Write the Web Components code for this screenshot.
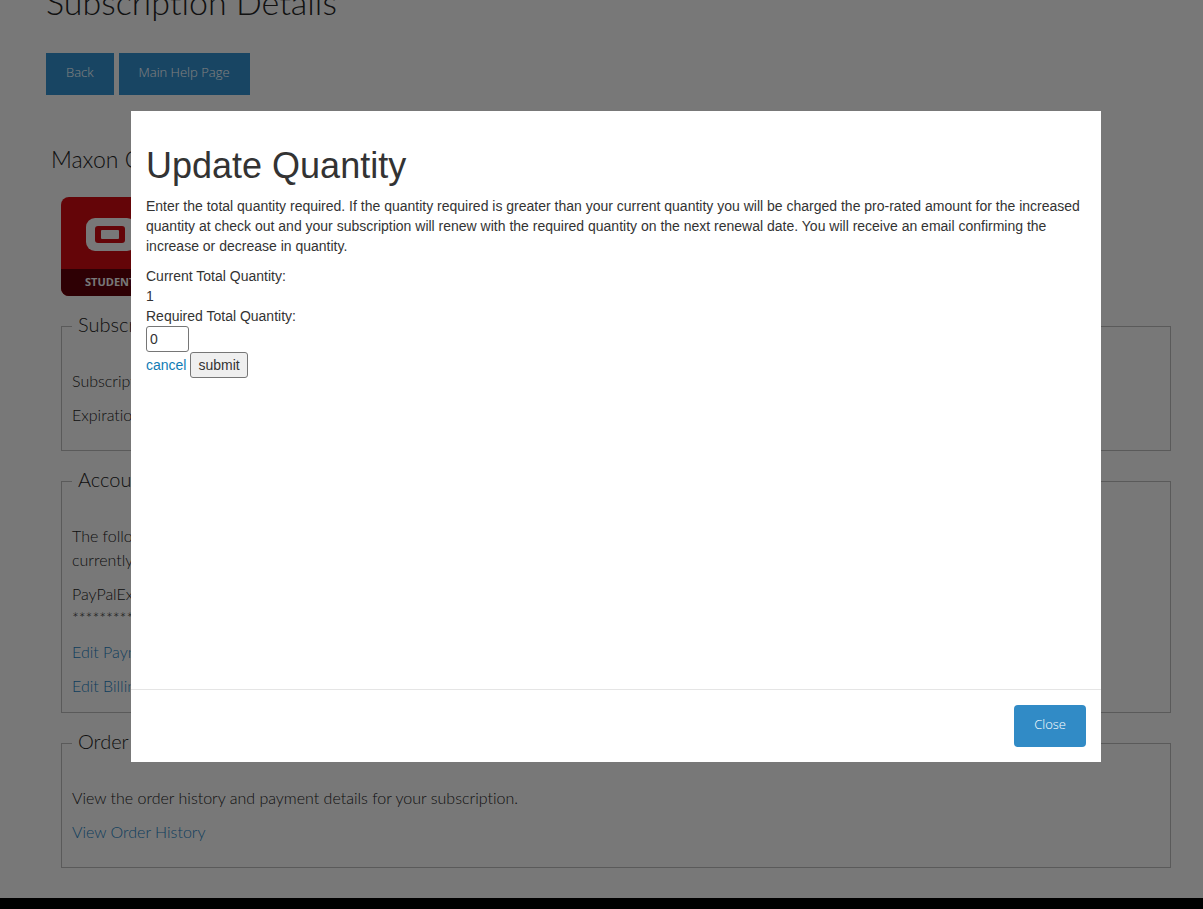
<!DOCTYPE html>
<html lang="en">
<head>
<meta charset="utf-8">
<title>Subscription Details</title>
<meta name="viewport" content="width=device-width, initial-scale=1">
<style>
body { margin: 0; background: #000; color: #222; font: 300 16px/24px Lato, "Open Sans", sans-serif;
  font-variant-ligatures: none; }
</style>
</head>
<body>
<subscription-page></subscription-page>
<quantity-dialog></quantity-dialog>
<script>
const define = (name, html) => customElements.define(name, class extends HTMLElement {
  constructor() {
    super();
    this.attachShadow({ mode: "open" }).innerHTML = html;
  }
});

define("action-button", `
<style>
:host { display: inline-block; }
button { display: block; height: 42px; padding: 0 20px 5px; border: 0; border-radius: var(--radius, 0);
  background: #318bc6; color: #fff; font: 300 13px/20px "Open Sans", sans-serif; cursor: pointer; }
</style>
<button type="button"><slot></slot></button>`);

define("product-badge", `
<style>
:host { display: block; width: 100px; height: 99px; }
svg { display: block; }
</style>
<svg width="100" height="99" viewBox="0 0 100 99" role="img" aria-label="Student product">
  <defs><clipPath id="tile"><rect width="100" height="99" rx="8"/></clipPath></defs>
  <g clip-path="url(#tile)">
    <rect width="100" height="99" fill="#c80a10"/>
    <rect y="72" width="100" height="27" fill="#5c0008"/>
  </g>
  <rect x="25" y="21" width="50" height="33" rx="9" fill="#f0f0f0"/>
  <rect x="34" y="29" width="30" height="17" rx="3" fill="#c80a10"/>
  <rect x="40" y="33" width="18" height="9" rx="1" fill="#f0f0f0"/>
  <text x="24" y="89" font-family="Open Sans, sans-serif" font-size="11" font-weight="700" fill="#f0f0f0">STUDENT</text>
</svg>`);

define("detail-group", `
<style>
:host { display: block; }
fieldset { min-width: 0; margin: 0; padding: 0 10px 23px; border: 1px solid #b4b4b4; }
:host([compact]) fieldset { padding-bottom: 14px; }
legend { padding: 0 6px 4px; font-size: 20px; line-height: 26px; }
.content { display: flex; flex-direction: column; align-items: flex-start; gap: 10px; padding-top: 28px; }
</style>
<fieldset><legend><slot name="title"></slot></legend><div class="content"><slot></slot></div></fieldset>`);

define("subscription-page", `
<style>
:host { display: block; background: #f1f1f1; padding: 0 32px 30px 46px; overflow: hidden; }
h1 { margin: -22px 0 0; font-size: 34px; font-weight: 300; line-height: 48px; }
.actions { display: flex; gap: 5px; margin-top: 27px; }
.product { margin: 49px 0 0 5px; font-size: 23px; font-weight: 300; line-height: 30px; }
.body { display: flex; flex-direction: column; gap: 15px; margin: 23px 0 0 15px; }
p { margin: 0; }
a { color: #1c7cba; text-decoration: none; }
</style>
<main>
  <h1>Subscription Details</h1>
  <nav class="actions">
    <action-button>Back</action-button>
    <action-button>Main Help Page</action-button>
  </nav>
  <h2 class="product">Maxon One</h2>
  <div class="body">
    <product-badge></product-badge>
    <detail-group>
      <span slot="title">Subscription</span>
      <p>Subscription</p>
      <p>Expiration</p>
    </detail-group>
    <detail-group compact>
      <span slot="title">Account</span>
      <p>The following<br>currently</p>
      <p>PayPalExpress<br>************</p>
      <a href="#">Edit Payment</a>
      <a href="#">Edit Billing</a>
    </detail-group>
    <detail-group>
      <span slot="title">Order History</span>
      <p>View the order history and payment details for your subscription.</p>
      <a href="#">View Order History</a>
    </detail-group>
  </div>
</main>`);

define("quantity-dialog", `
<style>
:host { position: fixed; inset: 0; display: flex; flex-direction: column; align-items: center;
  padding: 111px 15px 0 44px; background: rgba(0, 0, 0, .5); overflow: auto; box-sizing: border-box; }
section { width: 100%; max-width: 970px; background: #fff; color: #333;
  font: 400 14px/20px "Liberation Sans", Arial, sans-serif; }
.body { min-height: 543px; padding: 35px 15px 0; }
h2 { margin: 0 0 10px; font-size: 36px; font-weight: 400; line-height: 40px; }
p { margin: 0 0 10px; }
label, output { display: block; }
input { display: block; box-sizing: border-box; width: 43px; height: 26px; margin: 0; padding: 1px 3px;
  border: 1px solid #767676; border-radius: 3px; background: #fff; color: #333; font: inherit; }
.row { display: flex; align-items: center; gap: 4px; }
a { color: #0f7cb5; text-decoration: none; }
.row button { height: 26px; padding: 0 7px; border: 1px solid #767676; border-radius: 3px;
  background: #efefef; color: #333; font: inherit; }
footer { display: flex; justify-content: flex-end; padding: 15px; border-top: 1px solid #e5e5e5; --radius: 4px; }
</style>
<section role="dialog" aria-modal="true" aria-labelledby="heading">
  <div class="body">
    <h2 id="heading">Update Quantity</h2>
    <p>Enter the total quantity required. If the quantity required is greater than your current quantity you will be charged the pro-rated amount for the increased quantity at check out and your subscription will renew with the required quantity on the next renewal date. You will receive an email confirming the increase or decrease in quantity.</p>
    <form>
      <label for="current">Current Total Quantity:</label>
      <output id="current">1</output>
      <label for="required">Required Total Quantity:</label>
      <input id="required" type="text" inputmode="numeric" value="0">
      <div class="row"><a href="#">cancel</a><button type="button">submit</button></div>
    </form>
  </div>
  <footer><action-button>Close</action-button></footer>
</section>`);
</script>
</body>
</html>
